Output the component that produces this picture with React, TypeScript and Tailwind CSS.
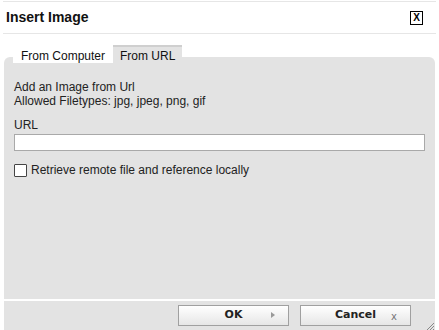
export default function App() {
  return (
    <div className="w-[439px] h-[330px] bg-white overflow-hidden relative font-['Liberation_Sans',Arial,sans-serif] text-[12px] text-[#222]">
      {/* Title bar */}
      <div className="mx-[3px] mt-[1px] border-t border-[#e6e6e6] h-[33px] border-b flex items-center justify-between px-[3px]">
        <span className="text-[14px] font-bold text-[#111]">Insert Image</span>
        <span className="mr-[10px] w-[13px] h-[14px] border border-black flex items-center justify-center text-[10px] font-bold leading-none text-black">
          X
        </span>
      </div>

      {/* Tabs */}
      <div className="flex pl-[13px] mt-[11px] h-[18px] relative z-10">
        <div className="bg-white px-[8px] pt-[2px] text-[12px] text-[#111]">From Computer</div>
        <div className="bg-[#e3e3e3] border-t-2 border-[#cfcfcf] px-[7px] text-[12px] text-[#111]">From URL</div>
      </div>

      {/* Panel */}
      <div className="mx-[4px] -mt-[6px] bg-[#e3e3e3] rounded-t-[6px] h-[242px] px-[10px] pt-[23px]">
        <div className="leading-[14px]">Add an Image from Url</div>
        <div className="leading-[14px]">Allowed Filetypes: jpg, jpeg, png, gif</div>
        <div className="mt-[10px] leading-[14px]">URL</div>
        <div className="mt-[2px] h-[17px] bg-white border border-[#a9a9a9]" />
        <div className="mt-[10px] flex items-center gap-[4px]">
          <span className="w-[13px] h-[13px] bg-white border border-[#444] rounded-[1px]" />
          <span>Retrieve remote file and reference locally</span>
        </div>
      </div>

      {/* Footer */}
      <div className="mx-[4px] mt-[2px] bg-[#e3e3e3] h-[30px] flex items-start justify-end pr-[24px] pt-[4px] gap-[11px] relative">
        <button className="w-[111px] h-[21px] border border-[#a0a0a0] bg-gradient-to-b from-white to-[#e6e6e6] relative font-['DejaVu_Sans',sans-serif] text-[11px] font-bold text-[#222]">
          <span className="absolute inset-0 flex items-center justify-center">OK</span>
          <span className="absolute left-[92px] top-[6px] w-0 h-0 border-y-[3.5px] border-y-transparent border-l-[4px] border-l-[#999]" />
        </button>
        <button className="w-[111px] h-[21px] border border-[#a0a0a0] bg-gradient-to-b from-white to-[#e6e6e6] relative font-['DejaVu_Sans',sans-serif] text-[11px] font-bold text-[#222]">
          <span className="absolute inset-0 flex items-center justify-center">Cancel</span>
          <span className="absolute left-[90px] top-[3px] text-[10px] font-normal text-[#777]">x</span>
        </button>
        <svg className="absolute right-0 bottom-0" width="12" height="12" viewBox="0 0 12 12">
          <path d="M11 4 L4 11 M11 7 L7 11 M11 10 L10 11" stroke="#888" strokeWidth="1" />
        </svg>
      </div>
    </div>
  )
}
